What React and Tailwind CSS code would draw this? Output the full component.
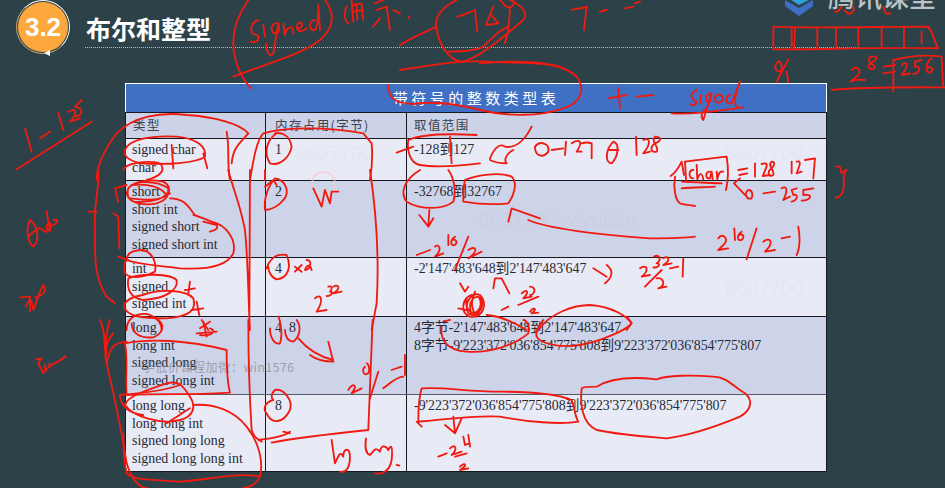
const serif = '"Liberation Serif","Noto Sans CJK SC",serif';
const cjk = '"Noto Sans CJK SC",sans-serif';
const sans = '"Liberation Sans",sans-serif';

const rows = [
  { h: 'h-[42px]', bg: 'bg-[#e8eaf6]', types: ['signed char', 'char'], size: '1', range: ['-128到127'] },
  { h: 'h-[77px]', bg: 'bg-[#cdd4e9]', types: ['short', 'short int', 'signed short', 'signed short int'], size: '2', range: ['-32768到32767'] },
  { h: 'h-[59px]', bg: 'bg-[#e8eaf6]', types: ['int', 'signed', 'signed int'], size: '4', range: ["-2'147'483'648到2'147'483'647"] },
  { h: 'h-[78px]', bg: 'bg-[#cdd4e9]', types: ['long', 'long int', 'signed long', 'signed long int'], size: '4  8', range: ["4字节-2'147'483'648到2'147'483'647", "8字节-9'223'372'036'854'775'808到9'223'372'036'854'775'807"] },
  { h: 'h-[77px]', bg: 'bg-[#e8eaf6]', types: ['long long', 'long long int', 'signed long long', 'signed long long int'], size: '8', range: ["-9'223'372'036'854'775'808到9'223'372'036'854'775'807"] },
];

const inks = [
  { x: 0, y: 0, d: [
    'M745 0C710 50 690 110 705 170C712 210 730 240 752 265',
    'M975 0C1005 40 1005 80 960 120C900 165 830 180 700 230',
    'M775 60C750 70 745 100 770 105C785 115 770 130 752 125M790 75L795 110M830 70C810 70 810 105 830 100C840 95 838 80 835 70L820 160C810 175 795 150 800 130M850 70L855 105C860 80 880 70 880 100M895 85C915 80 905 60 895 70C885 85 895 105 920 85M945 60C925 60 925 95 945 90C955 80 955 40 955 15L960 90',
    'M1040 20C1030 40 1035 65 1045 70M1055 0L1060 65M1060 15L1085 10L1090 60M1060 35L1085 30M1070 15L1072 60M1125 10L1150 0M1130 30L1160 20L1170 90M1140 55L1120 80M1180 30L1200 40M1225 50L1228 55',
    'M75 385L95 455M120 415L150 395M175 340L190 390M205 335C235 320 230 345 210 365L240 355M245 300L225 320C250 325 250 345 225 350M50 508L275 365',
    'M290 540C290 490 320 440 350 400C400 350 480 335 560 345C640 350 720 370 745 400C720 430 700 440 695 490M680 395C690 450 680 490 690 540',
    'M375 450C385 420 450 405 530 410C590 415 620 440 615 470C590 490 500 495 420 490C385 480 370 470 375 450M515 435L520 505M610 460L622 505',
    'M370 510C375 490 440 480 480 490C500 510 480 530 440 540',
    'M750 540C760 480 770 420 790 400C860 380 980 380 1090 400L1115 430C1120 480 1115 510 1110 540',
    'M830 400C800 420 790 460 810 490C840 500 870 470 875 440C870 410 850 395 825 400',
    'M1190 458L1240 440M1225 420C1260 405 1340 400 1430 405M1225 420C1220 450 1230 490 1260 495C1320 505 1400 495 1440 490M1350 410L1355 490',
    'M1165 255C1165 290 1180 310 1240 312C1320 300 1400 320 1440 330',
  ]},
  { x: 400, y: 0, d: [
    'M170 0C130 20 100 50 110 90C120 140 150 185 190 185C240 170 300 120 370 60C385 40 370 20 330 0',
    'M0 135C40 110 80 95 105 82',
    'M145 155C190 155 230 150 250 140C280 110 300 90 325 80',
    'M330 30L325 90L315 130',
    'M172 50C195 45 210 35 225 30L232 95',
    'M280 20L258 75L295 70L270 40',
    'M300 0C310 10 325 35 340 15C345 5 340 0 335 0',
    'M0 210C100 195 180 180 260 185C350 190 430 185 480 200',
  ]},
  { x: 480, y: 0, d: [
    'M275 30C290 25 310 25 320 20L312 90M360 35L380 30M435 25L460 20M465 10L480 5',
    'M0 330C80 350 180 350 250 325C300 310 320 270 290 230C240 180 100 180 0 190',
    'M385 295L440 285M415 265L420 325M470 290L520 285',
    'M650 270C620 285 640 300 650 305C650 315 635 318 630 312M662 285L662 310M690 280C675 285 675 310 690 305L695 280L670 360C660 350 665 335 680 325M710 285C700 295 705 315 725 305C735 295 725 280 710 285M750 285C735 290 735 315 755 310L780 245C765 285 760 310 770 320M575 340C650 345 730 330 790 322',
    'M880 80C1000 85 1200 80 1345 80C1360 100 1365 130 1375 145C1200 140 1000 150 880 148L880 80M935 85L935 148M945 85L942 148M1012 85L1012 145M1068 85L1068 145M1135 85L1135 135M1205 85L1205 140M1272 85L1272 140M1325 95L1325 130',
    'M895 185C880 195 885 215 900 215C910 205 905 185 895 185M925 178L890 245M920 215L925 245',
    'M1115 210C1130 195 1145 210 1135 225L1112 245C1125 235 1140 240 1155 240M1180 170C1160 170 1165 190 1180 195C1195 205 1170 215 1165 200C1165 190 1185 185 1190 175C1190 170 1185 168 1180 170M1210 200L1245 195M1210 220L1245 215M1240 275L1240 180C1300 165 1350 165 1385 170L1390 260M1055 270C1150 260 1300 262 1395 262',
    'M1265 195C1280 180 1290 195 1265 225L1290 220M1325 180L1305 185L1305 200C1325 195 1320 220 1300 222M1355 175C1335 190 1335 220 1350 218C1365 210 1355 195 1340 205',
    'M165 440C180 420 210 430 205 455C190 475 165 470 165 440M215 450L250 445M258 425L255 465M275 430C300 415 310 425 290 455L305 455M305 430C320 425 335 430 335 430L335 475',
    'M400 425C375 450 375 490 395 490C415 470 420 430 400 425M385 450L415 450',
    'M468 410L470 465M490 420C510 410 515 430 490 460L510 455M525 410C510 425 540 440 530 455C510 460 510 440 525 430C550 420 540 410 525 410',
    'M30 475C45 440 60 430 75 440C100 445 130 430 155 380M100 450C80 460 70 480 80 490C50 490 40 485 30 480',
  ]},
  { x: 770, y: 0, d: [
    'M195 35C205 40 210 25 215 20M225 30C235 50 255 40 250 20M340 20C345 40 350 45 360 40',
  ]},
  { x: 660, y: 140, d: [
    'M32 108C45 100 55 85 65 65L72 105',
    'M45 110C40 140 45 180 60 190C75 195 90 195 105 198',
    'M75 65C110 60 160 55 200 50C205 80 205 120 198 150',
    'M75 65L78 120M66 125C100 128 150 128 185 130M65 145C100 142 130 142 165 140',
    'M100 90C85 90 85 115 100 115M110 75L112 118C118 100 125 95 130 118M150 95C135 95 135 118 150 115L155 95L158 118M170 95L172 118C175 100 180 92 190 95',
    'M235 90L262 85M238 105L262 100M240 115L222 130L255 165',
    'M285 70L285 110M305 72C330 65 320 80 308 108L330 105M335 65C320 75 345 90 340 105C325 115 320 95 335 85C345 75 345 65 335 65',
    'M395 65L395 100M410 65C425 60 420 75 410 100L425 95M435 60L465 55L460 115',
    'M265 150C250 160 260 180 275 175C280 160 275 150 265 150M310 160L345 155M365 145C380 135 385 150 370 180L390 170M410 145L395 150L400 165C415 160 415 180 395 185M460 145L430 150L430 165C460 160 455 180 425 182',
    'M530 80C545 75 540 90 545 100C555 90 560 90 560 90C545 100 555 130 550 150C545 170 530 175 527 172',
  ]},
  { x: 0, y: 190, d: [
    'M90 90C75 120 85 160 100 170C120 150 115 110 90 90M85 140C100 125 105 120 115 115',
    'M110 120C125 105 130 130 140 125M145 100C135 110 140 125 150 120C155 105 150 95 145 100M140 65L150 125M160 90C180 85 175 100 150 110',
    'M62 322L90 320L90 365M78 350C90 320 95 325 100 360C110 335 120 300 130 285C140 300 135 315 105 322',
    'M108 508L125 505L115 520L130 550M135 525L135 545C145 530 150 525 155 525C175 515 190 505 197 498M148 520L150 530',
  ]},
  { x: 0, y: 170, d: [
    'M295 0C300 50 280 100 285 180C285 250 280 320 320 380L345 400M265 125L290 125',
    'M345 55L380 45M345 55L355 95M340 130L355 140L358 235M355 260L385 270',
    'M380 70C385 35 440 25 490 35C520 50 510 90 470 100C420 110 385 95 380 70M385 55C400 30 470 30 505 55C510 85 450 100 400 95C380 85 380 70 385 55M390 85C430 90 480 95 510 70M395 45C440 40 490 50 500 80',
    'M510 85C560 85 570 120 585 135L635 155C680 165 710 210 700 250C680 290 620 300 540 295C470 285 420 285 380 270M580 135L610 145M610 155L650 165C655 175 650 180 630 185',
    'M380 270C380 250 400 240 430 240C460 250 470 280 465 305C440 320 390 330 375 310C372 290 375 275 380 270',
    'M385 325C420 310 510 310 530 330C535 360 500 385 430 390C390 385 380 355 385 325M555 360L585 355M570 335L565 370',
    'M430 375C480 355 560 360 580 385C590 420 570 440 500 445C430 445 380 440 372 410C375 390 395 380 430 375M575 420L610 415M590 395L598 435',
    'M380 480C380 450 400 430 440 432C470 440 485 460 485 480',
    'M600 475L630 455M605 450L625 480',
    'M795 120C790 80 810 40 825 25C860 30 870 70 850 90C835 110 810 120 795 120M795 50L820 30L830 45',
    'M940 55L965 110L975 60L990 100L995 65L1015 65',
    'M800 295C810 265 830 250 860 255C875 290 865 325 830 328C810 320 805 300 805 290',
    'M885 290L905 305M905 285L885 305M920 270C940 270 930 300 915 300C920 285 930 280 935 300',
    'M945 385C960 370 975 385 950 425L980 420M985 350C1000 345 995 360 990 365C1005 365 990 380 980 378M1000 350C1015 340 1025 355 1000 370L1025 365',
    'M685 0C700 60 720 100 735 180C745 280 745 400 750 480M750 0L748 480M1110 0C1125 100 1140 230 1130 400L1115 480M795 0L795 30',
  ]},
  { x: 400, y: 170, d: [
    'M60 0C10 30 0 70 20 95C60 120 130 120 160 95C170 60 160 20 145 0',
    'M195 30C230 15 300 5 335 20C355 40 340 80 325 100C280 105 220 100 190 95C190 70 190 50 195 30',
    'M88 120L85 170M58 135L85 170L100 145',
    'M50 255L90 240M105 230C115 220 130 235 105 260L130 250M145 195L145 225M165 200C150 210 150 230 165 225C175 215 165 205 155 210M205 200L165 300M205 240C225 225 240 240 205 265L245 245',
    'M325 155L335 115L420 145M385 150C440 175 600 195 750 205C800 205 850 205 885 200',
    'M955 205C965 190 985 200 975 220L955 240L985 235M1003 175L1005 210M1025 185C1010 195 1010 215 1025 210C1035 200 1030 190 1018 195M1070 175L1040 268M1090 215C1110 200 1125 215 1095 245L1125 240M1145 205L1170 200M1195 170C1200 200 1200 235 1190 255',
    'M580 295L620 320M620 285C640 300 640 320 615 340',
    'M720 295C740 280 750 300 725 320L750 315M735 350L785 300M770 325C790 320 800 345 775 355L800 350M762 260C780 250 785 270 770 280C785 280 775 295 760 292M790 265C805 255 815 270 790 285L815 280M810 295L835 290M850 265L848 320',
    'M180 340L195 365L205 350',
    'M215 375C185 385 180 430 210 440C250 445 265 400 240 375C215 365 190 400 205 430C225 445 255 420 245 385C225 370 200 395 215 435M175 415L200 420M225 365C210 400 215 420 230 440M200 385C195 410 205 435 240 430M235 380C250 400 240 425 220 430',
    'M280 355L285 325L305 325L328 370M305 420L325 410M355 405L415 380M365 370C380 355 390 365 370 385L395 380M390 350C410 350 405 375 390 375M390 425C400 410 415 415 395 430L415 428',
    'M260 435C320 440 360 470 380 480M415 480C450 430 520 405 570 405C640 410 680 440 695 460L680 480',
    'M130 455L150 450',
  ]},
  { x: 0, y: 320, d: [
    'M395 10C395 40 420 55 460 52C490 40 495 15 475 0',
    'M375 70C450 55 560 60 680 90C680 140 680 180 690 218C600 225 500 220 380 225C375 170 385 120 375 70',
    'M375 255C380 230 440 210 500 190C540 180 550 200 570 230C590 260 580 290 540 300C480 315 400 290 375 255M360 225C420 220 500 210 540 195M360 225C360 260 390 280 430 285M500 310L570 265',
    'M590 40L650 35M610 5L620 50M630 25C650 30 640 50 600 45',
    'M300 0C320 40 310 80 320 130C340 220 360 300 380 430C395 480 420 504 440 504M340 40C320 60 310 100 320 130C330 80 340 70 380 65M330 0C320 30 315 70 320 100',
    'M370 340C370 380 370 420 380 460C400 480 450 480 540 485C620 480 720 455 780 470C790 430 780 370 740 320C700 270 640 250 580 255M780 470C770 490 750 504 730 504',
    'M745 0C745 100 750 250 755 330C760 350 775 360 785 365M775 360C820 355 860 345 870 335M815 368C880 355 960 345 1105 330M1105 330L1118 0M850 335L870 340',
    'M810 25C810 55 825 75 840 70C850 40 840 0 835 -10M855 30C855 50 865 65 880 65C900 50 905 20 890 0',
    'M895 55C920 85 960 110 1000 120M985 65L1000 125C970 125 950 120 930 105',
    'M820 240C790 250 790 270 800 280C815 315 850 310 870 270C880 240 850 205 825 210C810 225 815 235 820 240',
    'M995 360L1005 430C1015 410 1020 390 1030 410C1030 385 1050 380 1050 410C1050 440 1040 460 1020 455M1098 355C1095 380 1095 400 1110 405C1125 390 1125 380 1140 395C1145 370 1160 380 1165 390C1170 380 1180 365 1175 420C1170 450 1150 465 1125 460M1190 435L1198 437',
    'M1045 210C1060 185 1075 195 1055 220L1085 205M1095 140C1085 150 1090 170 1105 160C1112 150 1105 130 1100 130M1135 155L1110 235M1150 205C1170 190 1190 170 1210 170M1175 150L1205 140M1215 105L1215 165',
  ]},
  { x: 400, y: 320, d: [
    'M125 20C120 60 140 90 200 95C280 100 350 70 385 40C390 20 380 0 370 0',
    'M410 50C420 70 480 85 540 75C600 65 680 30 695 10C690 0 685 -5 680 -10M430 0C415 20 405 35 410 50',
    'M55 305C55 260 60 220 65 205C130 200 200 215 300 215C400 215 480 225 515 240C525 265 525 290 535 305C480 315 380 305 300 290C220 285 130 300 55 305M50 305L65 320',
    'M545 205C540 250 545 310 590 330C660 345 740 350 800 355C880 345 960 315 1020 290C1055 270 1060 240 1035 220C1000 200 980 170 940 170C880 165 800 165 770 178C700 170 630 175 590 200C570 200 550 200 545 205',
    'M135 315L165 340L185 295M160 290L165 340',
    'M115 410L140 400M150 385C165 370 175 385 155 405L185 395M190 350L195 375L210 370M205 345L210 380M165 410L200 400M180 440C195 425 205 435 180 450L205 445',
  ]},
];

const marks = [
  { c: 'left-[295px] top-[138px] text-[#e3e6f3]', t: '8607700' },
  { c: 'left-[725px] top-[138px] text-[#e3e6f3]', t: '8607700' },
  { c: 'left-[478px] top-[205px] text-[#c9d0e6]', t: '8607700:wtyutbhr' },
  { c: 'left-[725px] top-[273px] text-[#e3e6f3]', t: '8607700' },
];

export default function App() {
  return (
    <div className="relative w-[945px] h-[488px] overflow-hidden bg-[#2d4248]">
      <header className="h-[83px] flex items-start pl-[16px]">
        <div className="relative w-[54px] h-[54px] shrink-0 flex items-center justify-center rounded-full border border-l-[#c9a66b] border-b-[#c9a66b] border-t-white border-r-white">
          <div className="w-[50px] h-[50px] rounded-full bg-[#fda83e] flex items-center justify-center">
            <span className="text-white font-bold text-[26px]" style={{ fontFamily: sans }}>3.2</span>
          </div>
        </div>
        <div className="ml-[15px] flex-1 mr-[85px] mt-[10px] h-[38px] border-b border-dotted border-[#d9bb82]">
          <h1 className="pl-[1px] text-white font-bold text-[25px] leading-[36px]" style={{ fontFamily: cjk }}>布尔和整型</h1>
        </div>
      </header>

      <div className="absolute left-[785px] top-[-26px] flex items-start gap-[15px]">
        <svg width="28" height="28" viewBox="0 0 28 28" className="shrink-0 mt-[14px]">
          <path d="M0 12L14 20L28 12V18L14 28L0 18Z" fill="#3f6fc4" />
          <path d="M0 0H28V10L14 17L0 8Z" fill="#2ba3d8" />
        </svg>
        <span className="text-[27px] leading-[44px] font-medium text-[#bcc3c5]" style={{ fontFamily: cjk }}>腾讯课堂</span>
      </div>

      <main className="ml-[125px] w-[702px]" style={{ fontFamily: serif }}>
        <div className="h-[29px] bg-[#4070c4] border-t border-l border-r border-white flex items-center justify-center text-white text-[15px] tracking-[3.5px]" style={{ fontFamily: cjk }}>
          带符号的整数类型表
        </div>
        <div className="border-l border-r border-b border-[#15181c]">
          <div className="grid grid-cols-[139px_141px_1fr] h-[26px] bg-[#ccd3e8] border-t border-[#15181c] text-[#3b424e] text-[12.5px] tracking-[1.4px]" style={{ fontFamily: cjk }}>
            <div className="pl-[7px] flex items-center">类型</div>
            <div className="pl-[9px] flex items-center border-l border-[#15181c]">内存占用(字节)</div>
            <div className="pl-[7px] flex items-center border-l border-[#15181c]">取值范围</div>
          </div>
          {rows.map((r, i) => (
            <div key={i} className={`grid grid-cols-[139px_141px_1fr] ${r.h} ${r.bg} border-t ${i === 4 ? 'border-[#555b68]' : 'border-[#15181c]'} text-[13.9px] leading-[17.5px] text-[#262a34]`}>
              <div className="pl-[6px] pt-[2px]">
                {r.types.map((t) => <div key={t}>{t}</div>)}
              </div>
              <div className="pl-[9px] pt-[2px] border-l border-[#15181c] whitespace-pre">{r.size}</div>
              <div className="pl-[7px] pt-[2px] border-l border-[#15181c] whitespace-nowrap">
                {r.range.map((t) => <div key={t}>{t}</div>)}
              </div>
            </div>
          ))}
        </div>
      </main>

      <span className="absolute left-[130px] top-[358px] text-[12px] tracking-[0.6px] text-[#7f8590]/70" style={{ fontFamily: cjk }}>一手低价课程加微：win1576</span>
      {marks.map((m, i) => (
        <span key={i} className={`absolute text-[20px] ${m.c}`} style={{ fontFamily: sans }}>{m.t}</span>
      ))}

      <div className="absolute left-[311px] top-[171px] w-[25px] h-[25px] rounded-full border-2 border-[#f3c9c9]/60" />

      <svg className="absolute inset-0 pointer-events-none" width="945" height="488" viewBox="0 0 945 488" fill="none">
        <path d="M44 53L50 50L50 56Z" fill="#ffffff" />
        {inks.map((g, i) => (
          <g key={i} transform={`translate(${g.x} ${g.y}) scale(0.3333)`} stroke="#f01a10" strokeWidth="5.5" strokeLinecap="round" strokeLinejoin="round">
            {g.d.map((p, j) => <path key={j} d={p} />)}
          </g>
        ))}
      </svg>
    </div>
  );
}
